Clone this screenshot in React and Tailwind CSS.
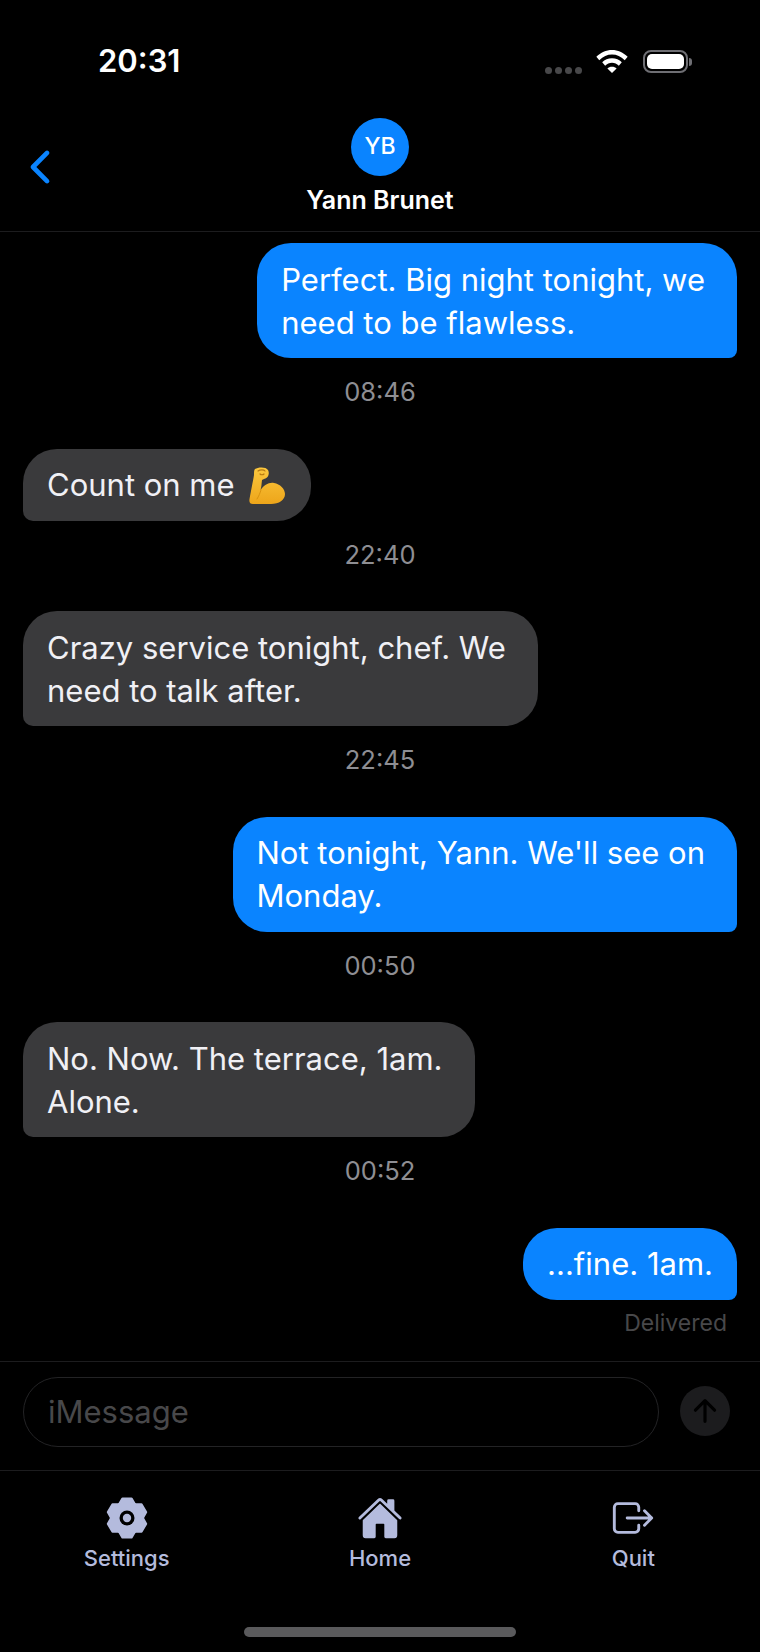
import React from "react";
import { IoHome, IoExitOutline, IoArrowUp, IoChevronBack } from "react-icons/io5";

const Arm = () => (
  <svg viewBox="0 0 36 37" className="inline-block w-[36px] h-[37px] ml-[14px] mr-[2px] align-[-8px]">
    <defs>
      <linearGradient id="armg" x1="0" y1="0" x2="0" y2="1">
        <stop offset="0" stopColor="#fcc83e" />
        <stop offset="1" stopColor="#eda51a" />
      </linearGradient>
    </defs>
    <path d="M6 2C9 0 17-.5 19 3c2 4 0 8-4 9l-2 1c-.5 4-.5 7-1.500 10C15 18 20 15 25 16c6 1 11 6 11 11 0 6-6 10-14 10H4c-3 0-4-2-3.500-5C2 24 4 14 5 8c0-3 0-5 1-6z" fill="url(#armg)" />
    <path d="M9 4c2-1.500 6-1.500 7 0M11 7c1 1 3 1 4 0" stroke="#b77a12" strokeWidth="1.200" fill="none" strokeLinecap="round" />
    <path d="M12 23c-1 3-2 6-4 9" stroke="#d9920f" strokeWidth="1" fill="none" strokeLinecap="round" />
  </svg>
);

const Gear = () => {
  const pts = [];
  for (let k = 0; k < 6; k++) {
    const c = -90 + k * 60;
    [[-28, 16], [-13, 19.8], [13, 19.8], [28, 16]].forEach(([a, r]) => {
      const t = ((c + a) * Math.PI) / 180;
      pts.push(`${(21 + r * Math.cos(t)).toFixed(2)},${(21 + r * Math.sin(t)).toFixed(2)}`);
    });
  }
  return (
    <svg viewBox="0 0 42 42" className="w-[42px] h-[42px]">
      <polygon points={pts.join(" ")} fill="#b4bbdd" stroke="#b4bbdd" strokeWidth="2.500" strokeLinejoin="round" />
      <circle cx="21" cy="21" r="7.500" fill="#000" />
      <circle cx="21" cy="21" r="4.200" fill="#b4bbdd" />
    </svg>
  );
};

const Bubble = ({ me, wrapped, children }) => (
  <div className={`flex ${me ? "justify-end pr-[23px]" : "justify-start pl-[23px]"}`}>
    <div className={`text-[31px] leading-[43px] pl-[24px] py-[14.5px] rounded-[34px] ${wrapped ? "pr-[32px]" : "pr-[24px]"} ${me ? "bg-[#0a84ff] text-white rounded-br-[8px]" : "bg-[#3a3a3c] text-[#f0f0f5] rounded-bl-[10px]"}`}>
      {children}
    </div>
  </div>
);

const Time = ({ children }) => (
  <div className="text-center text-[25.5px] leading-[30px] text-[#8e8e93] mt-[19px] mb-[41.5px]">{children}</div>
);

const Tab = ({ icon, label }) => (
  <div className="flex flex-col items-center">
    <div className="h-[46px] flex items-center justify-center">{icon}</div>
    <div className="mt-[4px] text-[22px] leading-[26px] font-medium">{label}</div>
  </div>
);

export default function App() {
  return (
    <div className="w-[760px] h-[1652px] bg-black flex flex-col overflow-hidden font-['Inter','Noto_Sans',sans-serif]">
      <div className="h-[118px] shrink-0 flex items-start justify-between pt-[42px] pl-[98px] pr-[72px]">
        <div className="text-[31px] leading-[38px] font-semibold text-white">20:31</div>
        <div className="flex items-start pt-[8px]">
          <div className="flex gap-[3px] mt-[16.500px] mr-[14px]">
            <span className="w-[7px] h-[7px] rounded-full bg-[#48484a]" />
            <span className="w-[7px] h-[7px] rounded-full bg-[#48484a]" />
            <span className="w-[7px] h-[7px] rounded-full bg-[#48484a]" />
            <span className="w-[7px] h-[7px] rounded-full bg-[#48484a]" />
          </div>
          <svg viewBox="0 0 32 23.500" className="w-[32px] h-[23px] mr-[15px]">
            <path d="M16 0C10 0 4.500 2.500 0 7l3 3.500C7 6.500 11 4.500 16 4.500s9 2 13 6L32 7C27.500 2.500 22 0 16 0z" fill="#fff" />
            <path d="M16 8.500c-4 0-7.500 1.500-10 4l3 3.500c2-1.800 4.300-3 7-3s5 1.200 7 3l3-3.500c-2.500-2.500-6-4-10-4z" fill="#fff" />
            <path d="M16 17c-2 0-3.500.7-4.700 1.800L16 23.500l4.700-4.700C19.500 17.700 18 17 16 17z" fill="#fff" />
          </svg>
          <div className="relative w-[45px] h-[23px] rounded-[8px] border-2 border-[#6e6e73] p-[2px]">
            <div className="w-full h-full rounded-[5px] bg-white" />
            <div className="absolute -right-[6px] top-[5.500px] w-[3px] h-[8px] rounded-r-full bg-[#6e6e73]" />
          </div>
        </div>
      </div>

      <div className="relative h-[114px] shrink-0 flex flex-col items-center border-b border-[#1c1c1e]">
        <IoChevronBack className="absolute left-[15px] top-[24px] text-[#0a84ff]" size={50} />
        <div className="w-[58px] h-[58px] rounded-full bg-[#0a84ff] flex items-center justify-center text-white text-[23px] font-medium pb-[1px]">YB</div>
        <div className="mt-[9px] text-white text-[25px] leading-[30px] font-semibold">Yann Brunet</div>
      </div>

      <div className="flex-1 pt-[11px]">
        <Bubble me wrapped>Perfect. Big night tonight, we<br />need to be flawless.</Bubble>
        <Time>08:46</Time>
        <Bubble>Count on me<Arm /></Bubble>
        <Time>22:40</Time>
        <Bubble wrapped>Crazy service tonight, chef. We<br />need to talk after.</Bubble>
        <Time>22:45</Time>
        <Bubble me wrapped>Not tonight, Yann. We'll see on<br />Monday.</Bubble>
        <Time>00:50</Time>
        <Bubble wrapped>No. Now. The terrace, 1am.<br />Alone.</Bubble>
        <Time>00:52</Time>
        <Bubble me>...fine. 1am.</Bubble>
        <div className="text-right pr-[33px] mt-[8px] text-[23px] leading-[30px] text-[#48484a]">Delivered</div>
      </div>

      <div className="h-[109px] shrink-0 border-t border-[#1c1c1e] flex items-start pt-[15px] pl-[23px] pr-[30px] justify-between">
        <div className="w-[636px] h-[70px] rounded-[35px] border border-[#232325] flex items-center pl-[24px] text-[31px] text-[#48484a]">iMessage</div>
        <div className="w-[50px] h-[50px] mt-[9px] rounded-full bg-[#1c1c1e] flex items-center justify-center">
          <IoArrowUp className="text-black" size={34} />
        </div>
      </div>

      <div className="relative h-[182px] shrink-0 border-t border-[#1c1c1e]">
        <div className="grid grid-cols-3 pt-[24px] text-[#b4bbdd]">
          <Tab icon={<Gear />} label="Settings" />
          <Tab icon={<IoHome size={46} />} label="Home" />
          <Tab icon={<IoExitOutline size={46} />} label="Quit" />
        </div>
        <div className="absolute left-[244px] top-[156px] w-[272px] h-[10px] rounded-full bg-[#5a5a5c]" />
      </div>
    </div>
  );
}
